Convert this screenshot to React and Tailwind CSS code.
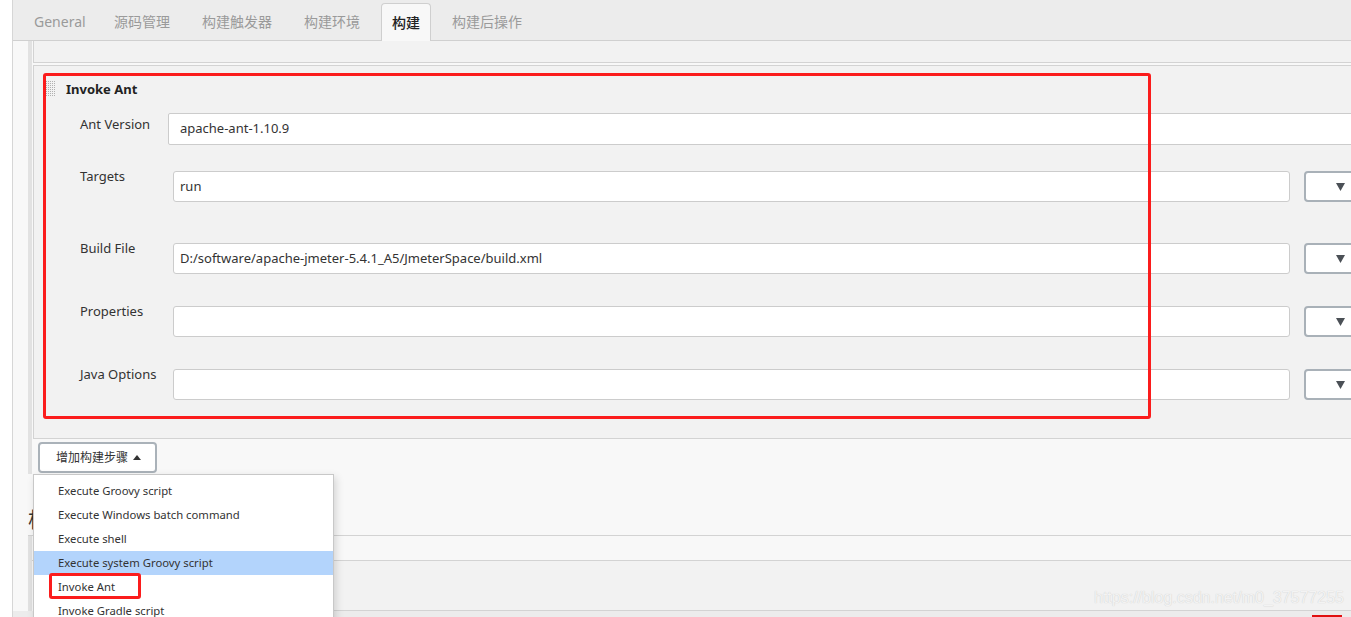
import React from 'react';

const tabs = ['General', '源码管理', '构建触发器', '构建环境', '构建', '构建后操作'];
const menuItems = [
  'Execute Groovy script',
  'Execute Windows batch command',
  'Execute shell',
  'Execute system Groovy script',
  'Invoke Ant',
  'Invoke Gradle script',
];

function Caret() {
  return (
    <svg width="9" height="8" viewBox="0 0 9 8">
      <path d="M0 0h9L4.5 8z" fill="#4b5056" />
    </svg>
  );
}

function Grip() {
  return (
    <svg width="10" height="16" viewBox="0 0 10 16">
      <defs>
        <pattern id="dots" width="2" height="2" patternUnits="userSpaceOnUse">
          <rect width="1" height="1" fill="#b0b0b0" />
        </pattern>
      </defs>
      <rect width="10" height="16" fill="url(#dots)" />
    </svg>
  );
}

function Field({ label, value, className }) {
  return (
    <div className={`flex pl-[46px] ${className}`}>
      <div className="w-[93px] shrink-0 text-[13px] leading-[16px] text-[#333]">{label}</div>
      <div className="mt-[3px] h-[31px] w-[1117px] shrink-0 rounded-[3px] border border-[#cccccc] bg-white px-[6px] flex items-center text-[13px] text-[#333]">
        {value}
      </div>
      <div className="ml-[14px] mt-[3px] h-[31px] w-[60px] shrink-0 rounded-[4px] border-2 border-[#a9b1b8] bg-white pl-[30px] flex items-center">
        <Caret />
      </div>
    </div>
  );
}

export default function App() {
  return (
    <div className="relative w-[1351px] h-[617px] overflow-hidden bg-white font-['Noto_Sans','Noto_Sans_CJK_SC',sans-serif]">
      <div className="ml-[12px] h-full border-l border-[#d6d6d6] bg-[#f8f8f8] flex flex-col">
        {/* Tabs */}
        <div className="h-[41px] shrink-0 border-b border-[#d0d0d0] bg-[#ececec] flex items-end gap-[10px] pl-[10px]">
          {tabs.map((t) =>
            t === '构建' ? (
              <div
                key={t}
                className="h-[38px] mb-[-1px] px-[10px] rounded-t-[4px] border border-b-0 border-[#cfcfcf] bg-[#f8f8f8] flex items-center text-[14px] font-medium text-[#222]"
              >
                {t}
              </div>
            ) : (
              <div
                key={t}
                className={`h-[37px] px-[11px] flex items-center text-[14px] text-[#9a9a9a] ${t === 'General' ? 'w-[70px] text-[13.5px]' : ''}`}
              >
                {t}
              </div>
            )
          )}
        </div>

        {/* Build section */}
        <div className="flex shrink-0">
          <div className="w-[15px] shrink-0" />
          <div className="w-[4px] shrink-0 bg-[#e2e2e2]" />
          <div className="flex-1 pl-[1px]">
            <div className="h-[22px] border-l border-b border-[#d3d3d3] bg-[#f2f2f2]" />
            <div className="h-[2px]" />
            <div className="h-[374px] border-t border-l border-b border-[#d3d3d3] bg-[#f2f2f2]">
              <div className="mt-[14px] flex items-center gap-[10px] pl-[12px] h-[18px]">
                <Grip />
                <span className="text-[13px] font-bold leading-[18px] text-[#222]">Invoke Ant</span>
              </div>

              <div className="mt-[15px] flex pl-[46px]">
                <div className="w-[88px] shrink-0 pt-[3px] text-[13px] leading-[16px] text-[#333]">Ant Version</div>
                <div className="h-[32px] w-[1300px] shrink-0 rounded-[2px] border border-[#cccccc] bg-white px-[11px] flex items-center text-[13px] text-[#333]">
                  apache-ant-1.10.9
                </div>
              </div>

              <Field label="Targets" value="run" className="mt-[23px]" />
              <Field
                label="Build File"
                value="D:/software/apache-jmeter-5.4.1_A5/JmeterSpace/build.xml"
                className="mt-[38px]"
              />
              <Field label="Properties" value="" className="mt-[29px]" />
              <Field label="Java Options" value="" className="mt-[29px]" />
            </div>

            <div className="h-[35px] pl-[5px] pt-[3px]">
              <div className="h-[31px] w-[119px] rounded-[4px] border-2 border-[#aab2b9] bg-white flex items-center pl-[16px] gap-[5px] text-[12px] text-[#333]">
                增加构建步骤
                <svg width="8" height="5" viewBox="0 0 8 5">
                  <path d="M0 5h8L4 0z" fill="#333" />
                </svg>
              </div>
            </div>
          </div>
        </div>

        {/* Post-build heading */}
        <div className="ml-[15px] h-[62px] shrink-0 border-b border-[#d3d3d3] flex flex-col justify-end pb-[4px]">
          <div className="text-[21px] leading-[24px] text-[#333]">构建后操作</div>
        </div>

        <div className="flex h-[25px] shrink-0">
          <div className="w-[15px] shrink-0" />
          <div className="w-[4px] shrink-0 bg-[#e2e2e2]" />
          <div className="flex-1 border-b border-[#d3d3d3]" />
        </div>

        <div className="flex h-[50px] shrink-0">
          <div className="w-[15px] shrink-0" />
          <div className="w-[4px] shrink-0 bg-[#e2e2e2]" />
          <div className="flex-1 pl-[1px]">
            <div className="h-full border-l border-b border-[#d3d3d3] bg-[#f2f2f2]" />
          </div>
        </div>

        <div className="flex-1 bg-[#ececec]" />
      </div>

      {/* Red annotation */}
      <div className="absolute left-[43px] top-[73px] w-[1108px] h-[346px] rounded-[3px] border-[3px] border-[#fb1c1c]" />

      {/* Dropdown menu */}
      <div className="absolute left-[33px] top-[474px] w-[301px] h-[160px] border border-[#c8c8c8] bg-white pt-[4px] shadow-[2px_3px_8px_rgba(0,0,0,0.15)]">
        {menuItems.map((m) => (
          <div
            key={m}
            className={`h-[24px] pl-[24px] flex items-center text-[11.3px] text-[#333] ${m === 'Execute system Groovy script' ? 'bg-[#b3d4fc]' : ''}`}
          >
            {m}
          </div>
        ))}
      </div>
      <div className="absolute left-[49px] top-[573px] w-[92px] h-[26px] rounded-[3px] border-[3px] border-[#fb1c1c]" />

      {/* Watermark */}
      <div className="absolute left-[1094px] top-[588px] text-[16px] leading-[20px] font-['Liberation_Sans',sans-serif] text-[#f3f3f3] [text-shadow:0_0_1px_#c4c4c4]">
        https://blog.csdn.net/m0_37577255
      </div>
      <div className="absolute left-[1312px] top-[615px] w-[30px] h-[2px] bg-[#e01010]" />
    </div>
  );
}
